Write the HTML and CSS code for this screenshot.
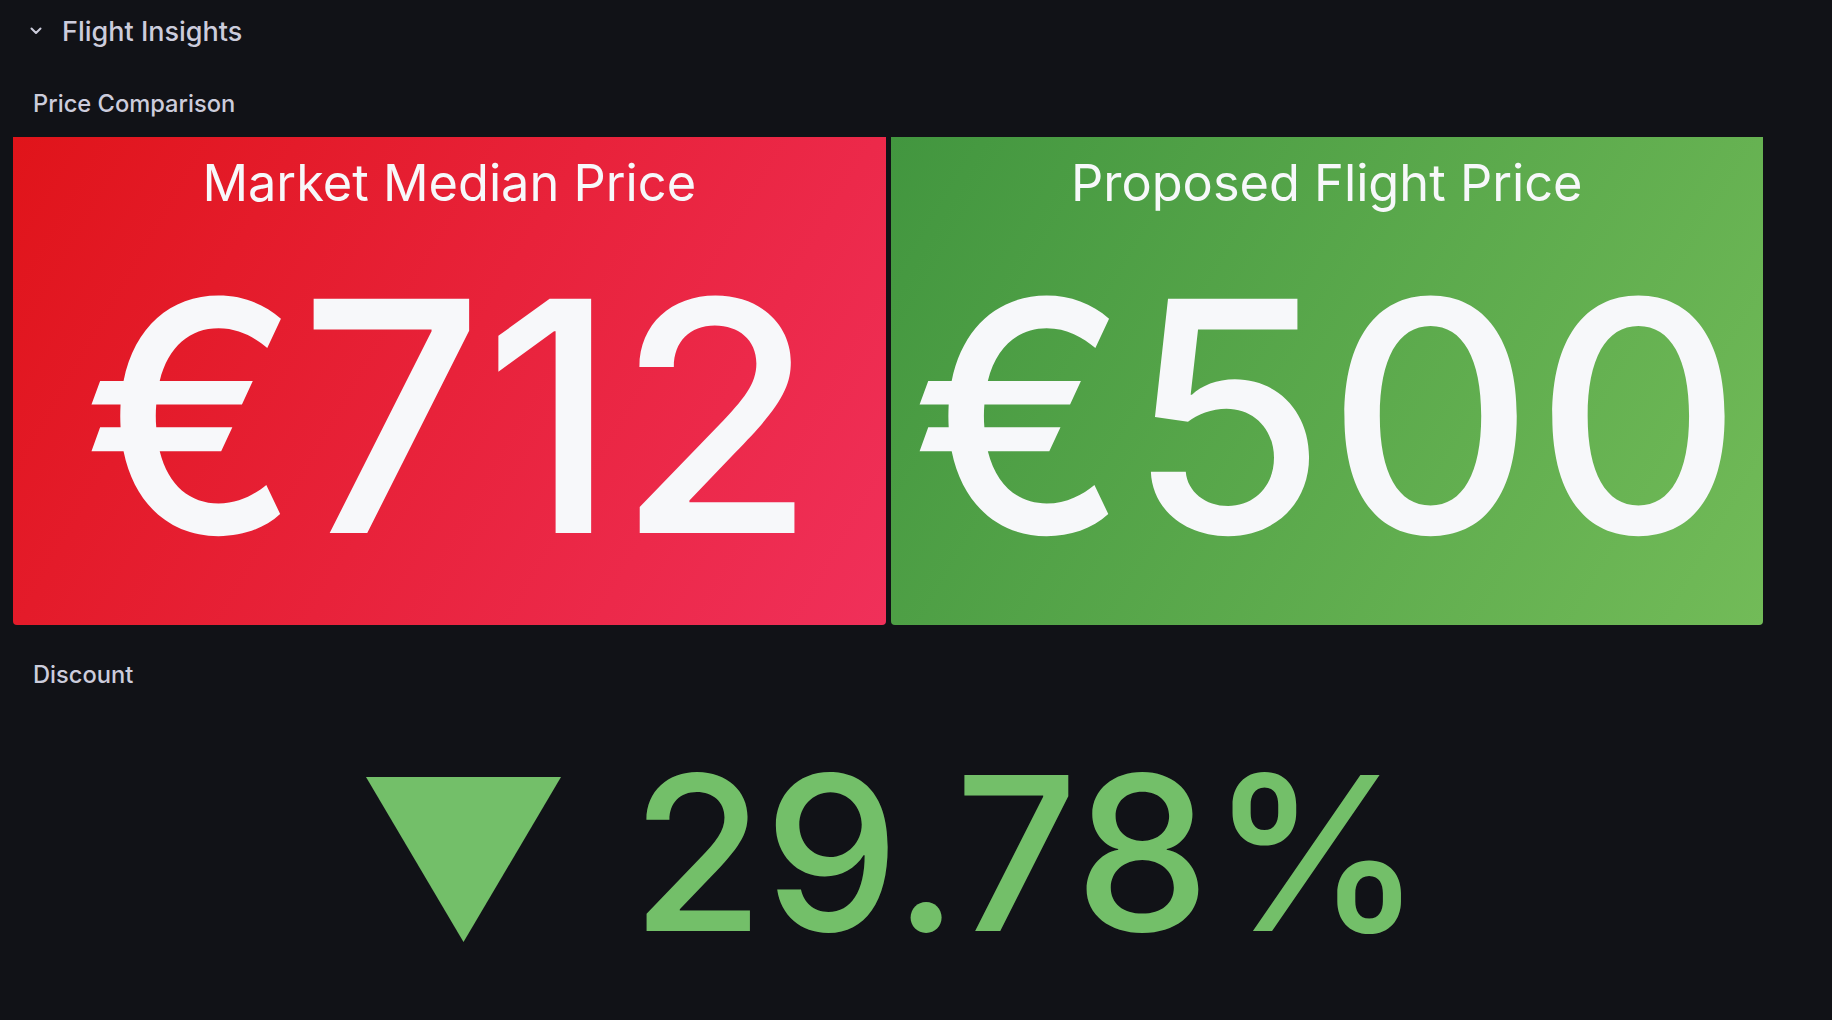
FILE: index.html
```html
<!DOCTYPE html>
<html lang="en">
<head>
  <meta charset="UTF-8">
  <meta name="viewport" content="width=device-width, initial-scale=1.0">
  <title>Flight Insights</title>
  <link rel="stylesheet" href="styles.css">
</head>
<body>
  <div class="dashboard">
    <div class="row-header">
      <svg class="chevron" width="12" height="8" viewBox="0 0 12 8">
        <path d="M1.5 1.5 L6 6 L10.5 1.5" fill="none" stroke="#ccccdc" stroke-width="2" stroke-linecap="round" stroke-linejoin="round"/>
      </svg>
      <span class="row-title">Flight Insights</span>
    </div>

    <div class="panel-title">Price Comparison</div>
    <div class="stat-grid">
      <div class="stat stat-red">
        <div class="stat-name">Market Median Price</div>
        <div class="stat-value">€712</div>
      </div>
      <div class="stat stat-green">
        <div class="stat-name">Proposed Flight Price</div>
        <div class="stat-value">€500</div>
      </div>
    </div>

    <div class="panel-title discount-title">Discount</div>
    <div class="discount">
      <svg class="arrow" width="195" height="165" viewBox="0 0 195 165">
        <polygon points="0,0 195,0 97.5,165" fill="#73bf69"/>
      </svg>
      <span class="discount-value">29.78%</span>
    </div>
  </div>
</body>
</html>
```

FILE: styles.css
```css
body {
  margin: 0;
  background-color: #111217;
  font-family: Inter, "Noto Sans", sans-serif;
  color: #ccccdc;
}
.dashboard {
  width: 1750px;
  margin-left: 13px;
}
.row-header {
  display: flex;
  align-items: center;
  gap: 20px;
  padding: 16px 0 0 17px;
  height: 32px;
}
.chevron {
  margin-top: -2px;
}
.row-title {
  font-size: 27px;
  font-weight: 500;
  line-height: 32px;
}
.panel-title {
  margin-top: 42px;
  padding-left: 20px;
  font-size: 23.7px;
  font-weight: 500;
  line-height: 28px;
}
.stat-grid {
  display: grid;
  grid-template-columns: 1fr 1fr;
  gap: 5px;
  margin-top: 19px;
}
.stat {
  height: 488px;
  box-sizing: border-box;
  padding-top: 15px;
  border-radius: 0 0 4px 4px;
  color: #f7f8fa;
  text-align: center;
}
.stat-red {
  background: linear-gradient(120deg, #e0141a, #f0305a);
}
.stat-green {
  background: linear-gradient(120deg, #42963f, #72bb58);
}
.stat-name {
  font-size: 50.5px;
  line-height: 62px;
}
.stat-value {
  margin-top: 41px;
  font-size: 322px;
  font-weight: 500;
  line-height: 322px;
}
.discount-title {
  margin-top: 36px;
}
.discount {
  display: flex;
  justify-content: center;
  align-items: flex-start;
  gap: 70px;
  margin-top: 57px;
  padding-left: 14px;
  color: #73bf69;
}
.arrow {
  margin-top: 31px;
}
.discount-value {
  font-size: 215px;
  font-weight: 500;
  line-height: 215px;
}
```
